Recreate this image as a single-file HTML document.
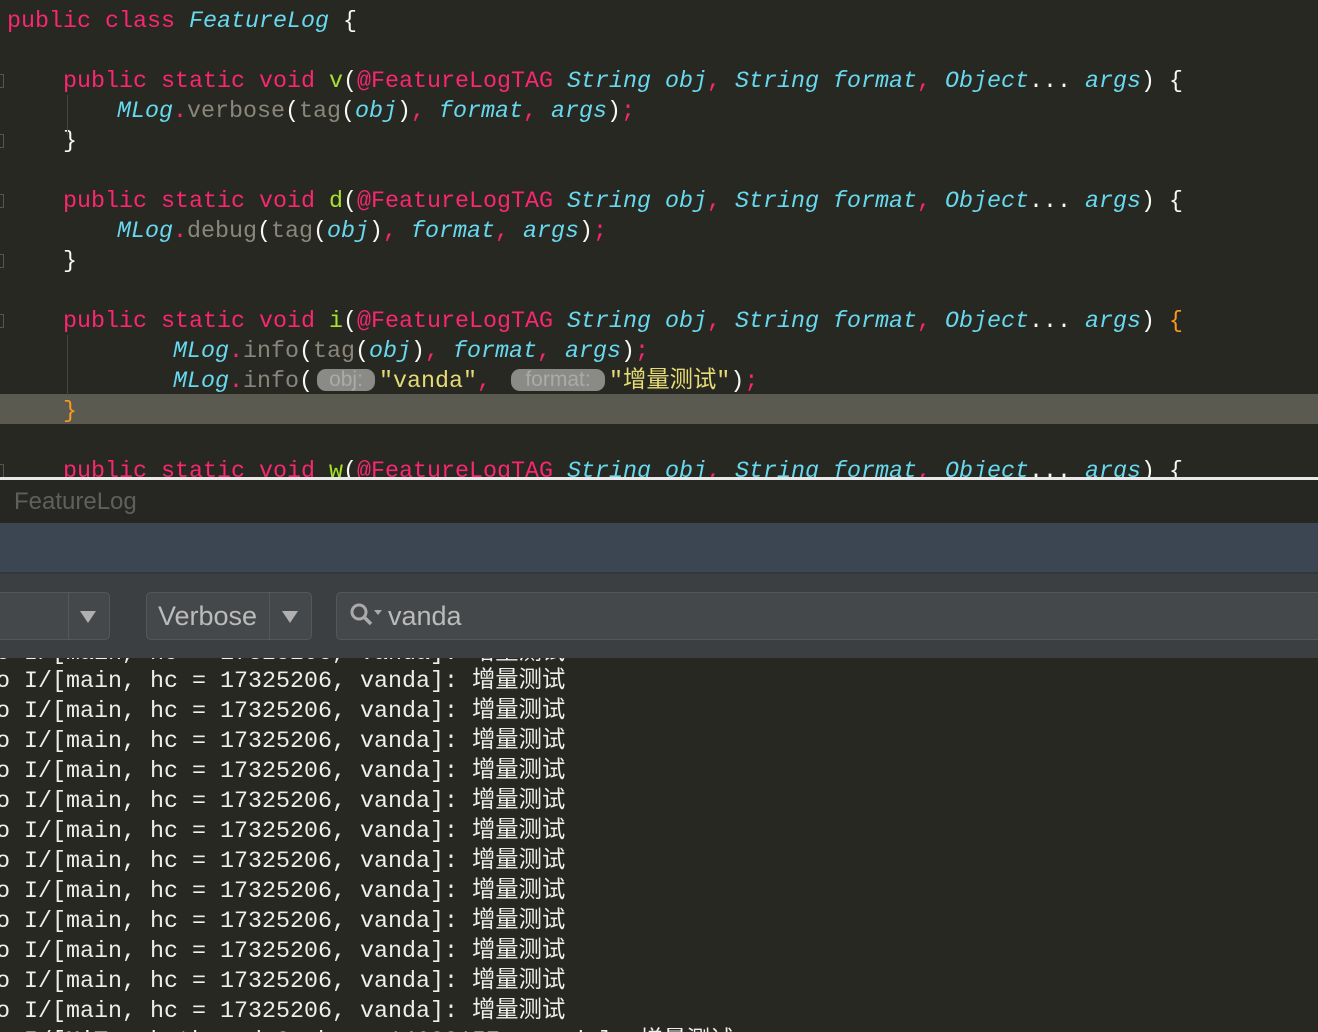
<!DOCTYPE html><html><head><meta charset="utf-8"><style>
body{margin:0;width:1318px;height:1032px;overflow:hidden;background:#272822;position:relative;font-family:"Liberation Mono","Noto Sans CJK SC",monospace;font-size:23.33px;}
.l{position:absolute;left:7px;height:30px;line-height:30px;white-space:pre;color:#f8f8f2}
.k{color:#f92672}.t{color:#66d9ef;font-style:italic}.f{color:#a6e22e}.g{color:#8a877a}.s{color:#e6db74}.o{color:#fd971f}
.h{display:inline-block;background:#8a8a86;color:#aaa;border-radius:9px;font-family:"Liberation Sans",sans-serif;font-size:21px;line-height:22px;text-align:center;vertical-align:1px}
.log{position:absolute;left:-4px;height:30px;line-height:30px;white-space:pre;color:#eeeeea;font-size:23.33px}
.gut{position:absolute;left:0;width:3px;height:12px;border:1px solid #555;border-left:none}
</style></head><body>
<div class="l" style="top:7px"><span class="k">public class </span><span class="t">FeatureLog</span> {</div>
<div class="l" style="top:67px">    <span class="k">public static void </span><span class="f">v</span>(<span class="k">@FeatureLogTAG </span><span class="t">String obj</span><span class="k">, </span><span class="t">String format</span><span class="k">, </span><span class="t">Object</span>... <span class="t">args</span>) {</div>
<div class="l" style="top:97px;left:5px">        <span class="t">MLog</span><span class="k">.</span><span class="g">verbose</span>(<span class="g">tag</span>(<span class="t">obj</span>)<span class="k">, </span><span class="t">format</span><span class="k">, </span><span class="t">args</span>)<span class="k">;</span></div>
<div class="l" style="top:127px">    }</div>
<div class="l" style="top:187px">    <span class="k">public static void </span><span class="f">d</span>(<span class="k">@FeatureLogTAG </span><span class="t">String obj</span><span class="k">, </span><span class="t">String format</span><span class="k">, </span><span class="t">Object</span>... <span class="t">args</span>) {</div>
<div class="l" style="top:217px;left:5px">        <span class="t">MLog</span><span class="k">.</span><span class="g">debug</span>(<span class="g">tag</span>(<span class="t">obj</span>)<span class="k">, </span><span class="t">format</span><span class="k">, </span><span class="t">args</span>)<span class="k">;</span></div>
<div class="l" style="top:247px">    }</div>
<div style="position:absolute;left:0;top:394px;width:1318px;height:30px;background:#5a5a50"></div>
<div class="l" style="top:307px">    <span class="k">public static void </span><span class="f">i</span>(<span class="k">@FeatureLogTAG </span><span class="t">String obj</span><span class="k">, </span><span class="t">String format</span><span class="k">, </span><span class="t">Object</span>... <span class="t">args</span>) <span class="o">{</span></div>
<div class="l" style="top:337px;left:5px">            <span class="t">MLog</span><span class="k">.</span><span class="g">info</span>(<span class="g">tag</span>(<span class="t">obj</span>)<span class="k">, </span><span class="t">format</span><span class="k">, </span><span class="t">args</span>)<span class="k">;</span></div>
<div class="l" style="top:367px;left:5px">            <span class="t">MLog</span><span class="k">.</span><span class="g">info</span>(<span class="h" style="width:58px;margin:0 4px 0 4px">obj:</span><span class="s">"vanda"</span><span class="k">,</span><span class="h" style="width:94px;margin:0 4px 0 20px">format:</span><span class="s">"增量测试"</span>)<span class="k">;</span></div>
<div class="l" style="top:397px">    <span class="o">}</span></div>
<div class="l" style="top:457px">    <span class="k">public static void </span><span class="f">w</span>(<span class="k">@FeatureLogTAG </span><span class="t">String obj</span><span class="k">, </span><span class="t">String format</span><span class="k">, </span><span class="t">Object</span>... <span class="t">args</span>) {</div>
<div style="position:absolute;left:67px;top:95px;width:1px;height:40px;background:#444"></div>
<div style="position:absolute;left:67px;top:335px;width:1px;height:60px;background:#444"></div>
<div class="gut" style="top:74px"></div><div class="gut" style="top:134px"></div><div class="gut" style="top:194px"></div><div class="gut" style="top:254px"></div><div class="gut" style="top:314px"></div><div class="gut" style="top:464px"></div>
<div style="position:absolute;left:0;top:477px;width:1318px;height:3px;background:#e8e8e8"></div>
<div style="position:absolute;left:0;top:480px;width:1318px;height:43px;background:#262622"></div>
<div style="position:absolute;left:14px;top:488px;font-family:'Liberation Sans',sans-serif;font-size:24px;color:#5f605c">FeatureLog</div>
<div style="position:absolute;left:0;top:523px;width:1318px;height:49px;background:#3c4552;border-bottom:2px solid #33383e"></div>
<div style="position:absolute;left:0;top:574px;width:1318px;height:84px;background:#3c3f41"></div>
<div style="position:absolute;left:-10px;top:592px;width:118px;height:46px;border:1px solid #55585a;border-radius:5px;background:#45484a"></div>
<div style="position:absolute;left:68px;top:593px;width:1px;height:46px;background:#55585a"></div>
<div style="position:absolute;left:80px;top:611px;border-left:8px solid transparent;border-right:8px solid transparent;border-top:12px solid #b0b0b0"></div>
<div style="position:absolute;left:146px;top:592px;width:164px;height:46px;border:1px solid #55585a;border-radius:5px;background:#45484a"></div>
<div style="position:absolute;left:269px;top:593px;width:1px;height:46px;background:#55585a"></div>
<div style="position:absolute;left:282px;top:611px;border-left:8px solid transparent;border-right:8px solid transparent;border-top:12px solid #b0b0b0"></div>
<div style="position:absolute;left:158px;top:601px;font-family:'Liberation Sans',sans-serif;font-size:27px;color:#bbb">Verbose</div>
<div style="position:absolute;left:336px;top:592px;width:1000px;height:46px;border:1px solid #55585a;border-radius:5px;background:#45484a"></div>
<svg style="position:absolute;left:348px;top:601px" width="40" height="30"><circle cx="11" cy="11" r="7" stroke="#aaa" stroke-width="3" fill="none"/><path d="M16 16l7 7" stroke="#aaa" stroke-width="3.5"/><path d="M26 9h8l-4 5z" fill="#aaa"/></svg>
<div style="position:absolute;left:388px;top:601px;font-family:'Liberation Sans',sans-serif;font-size:27px;color:#bbb">vanda</div>
<div style="position:absolute;left:0;top:658px;width:1318px;height:374px;background:#272822;overflow:hidden">
<div class="log" style="top:-19px">o I/[main, hc = 17325206, vanda]: 增量测试</div>
<div class="log" style="top:9px">o I/[main, hc = 17325206, vanda]: 增量测试</div>
<div class="log" style="top:39px">o I/[main, hc = 17325206, vanda]: 增量测试</div>
<div class="log" style="top:69px">o I/[main, hc = 17325206, vanda]: 增量测试</div>
<div class="log" style="top:99px">o I/[main, hc = 17325206, vanda]: 增量测试</div>
<div class="log" style="top:129px">o I/[main, hc = 17325206, vanda]: 增量测试</div>
<div class="log" style="top:159px">o I/[main, hc = 17325206, vanda]: 增量测试</div>
<div class="log" style="top:189px">o I/[main, hc = 17325206, vanda]: 增量测试</div>
<div class="log" style="top:219px">o I/[main, hc = 17325206, vanda]: 增量测试</div>
<div class="log" style="top:249px">o I/[main, hc = 17325206, vanda]: 增量测试</div>
<div class="log" style="top:279px">o I/[main, hc = 17325206, vanda]: 增量测试</div>
<div class="log" style="top:309px">o I/[main, hc = 17325206, vanda]: 增量测试</div>
<div class="log" style="top:339px">o I/[main, hc = 17325206, vanda]: 增量测试</div>
<div class="log" style="top:369px">o I/[MiTrack-thread-2, hc = 14622157, vanda]: 增量测试</div>
</div>
</body></html>
